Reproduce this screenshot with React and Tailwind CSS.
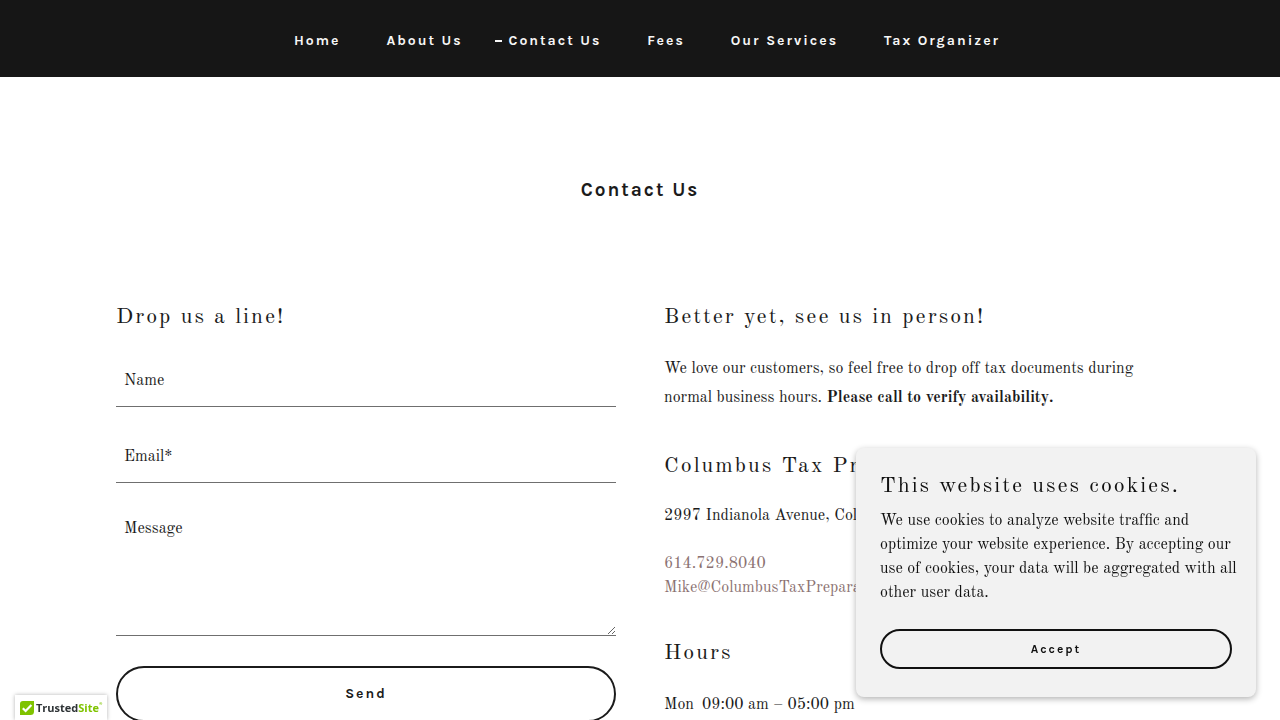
const NAV_ITEMS = [
  { label: 'Home', href: '#home' },
  { label: 'About Us', href: '#about' },
  { label: 'Contact Us', href: '#contact', active: true },
  { label: 'Fees', href: '#fees' },
  { label: 'Our Services', href: '#services' },
  { label: 'Tax Organizer', href: '#organizer' },
];

const Header = () => (
  <header className="bg-[#161616] px-6 pt-[30px] pb-[26px]">
    <nav className="flex justify-center gap-8">
      {NAV_ITEMS.map((item) => (
        <a
          key={item.label}
          href={item.href}
          className="flex items-center text-sm leading-[21px] font-bold tracking-[2px] text-[#f7f7f7] font-['Karla','Inter',sans-serif]"
        >
          <span className={`w-[7px] h-[2px] mr-[7px] ${item.active ? 'bg-[#f7f7f7]' : ''}`}></span>
          {item.label}
        </a>
      ))}
    </nav>
  </header>
);

const SectionTitle = ({ children }) => (
  <h2 className="text-[22px] leading-7 tracking-[2px] text-[#1b1b1b]">{children}</h2>
);

const Field = ({ id, label, type }) => (
  <div>
    <label htmlFor={id} className="sr-only">{label}</label>
    <input
      id={id}
      type={type}
      placeholder={label}
      className="block w-full h-[52px] px-2 border-b border-[#6f6f6f] bg-transparent outline-none placeholder:text-[#1b1b1b]"
    />
  </div>
);

const ContactForm = () => (
  <form className="flex-1" onSubmit={(e) => e.preventDefault()}>
    <SectionTitle>Drop us a line!</SectionTitle>
    <div className="mt-6 space-y-6">
      <Field id="name" label="Name" type="text" />
      <Field id="email" label="Email*" type="email" />
      <div>
        <label htmlFor="message" className="sr-only">Message</label>
        <textarea
          id="message"
          placeholder="Message"
          className="block w-full h-[129px] px-2 py-[10px] border-b border-[#6f6f6f] bg-transparent outline-none resize-y placeholder:text-[#1b1b1b]"
        ></textarea>
      </div>
    </div>
    <button
      type="submit"
      className="mt-[30px] w-full h-14 rounded-full border-2 border-[#1b1b1b] text-sm font-bold tracking-[2px] font-['Karla','Inter',sans-serif]"
    >
      Send
    </button>
  </form>
);

const ContactInfo = () => (
  <div className="flex-1">
    <SectionTitle>Better yet, see us in person!</SectionTitle>
    <p className="mt-6 leading-[29px]">
      We love our customers, so feel free to drop off tax documents during normal business hours.{' '}
      <strong className="font-bold">Please call to verify availability.</strong>
    </p>
    <div className="mt-[39px]">
      <SectionTitle>Columbus Tax Preparation</SectionTitle>
    </div>
    <p className="mt-6">2997 Indianola Avenue, Columbus, Ohio 43202</p>
    <div className="mt-6 flex flex-col items-start text-[#8b7272]">
      <a href="tel:6147298040">614.729.8040</a>
      <a href="mailto:Mike@ColumbusTaxPreparation.com">Mike@ColumbusTaxPreparation.com</a>
    </div>
    <div className="mt-[39px]">
      <SectionTitle>Hours</SectionTitle>
    </div>
    <table className="mt-[26px]">
      <tbody>
        <tr>
          <td className="pr-2">Mon</td>
          <td>09:00 am – 05:00 pm</td>
        </tr>
      </tbody>
    </table>
  </div>
);

const CookieBanner = () => (
  <div className="fixed right-6 bottom-[23px] w-[400px] px-6 pt-6 pb-7 rounded-lg bg-[#f2f2f2] text-[#111111] shadow-[0_2px_6px_rgba(0,0,0,0.3)]">
    <h4 className="text-[22px] leading-7 tracking-[2px]">This website uses cookies.</h4>
    <p className="mt-[9px] -mr-2 leading-6">
      We use cookies to analyze website traffic and optimize your website experience. By accepting our use of
      cookies, your data will be aggregated with all other user data.
    </p>
    <button
      type="button"
      className="mt-6 w-full h-10 rounded-full border-2 border-[#111111] text-xs font-bold tracking-[2px] font-['Karla','Inter',sans-serif]"
    >
      Accept
    </button>
  </div>
);

const TrustBadge = () => (
  <div className="fixed left-[15px] bottom-0 w-[92px] h-[25px] px-[5px] flex items-center bg-white shadow-[0_0_4px_rgba(0,0,0,0.3)] font-['Open_Sans',sans-serif] text-[11px] font-bold">
    <svg width="14" height="14" viewBox="0 0 14 14" className="mr-[2px] shrink-0">
      <path d="M3 0H14V10.5A3.5 3.5 0 0 1 10.5 14H0V3A3 3 0 0 1 3 0Z" fill="#7fc300" />
      <path d="M2.8 7.2L5.6 10L11.4 4" fill="none" stroke="#fff" strokeWidth="2.2" />
    </svg>
    <span className="text-[#2f3437]">Trusted</span>
    <span className="text-[#7fc300]">Site</span>
    <span className="self-start pt-[7px] text-[4px] leading-[4px] text-[#7fc300]">®</span>
  </div>
);

const App = () => (
  <div className="min-h-screen bg-white text-base leading-6 text-[#1b1b1b] font-['Old_Standard_TT','Liberation_Serif',serif]">
    <Header />
    <main className="max-w-[1096px] mx-auto px-6 pt-[100px] pb-20">
      <h1 className="text-center text-[19px] leading-[26px] font-bold tracking-[2px] font-['Karla','Inter',sans-serif]">
        Contact Us
      </h1>
      <div className="mt-[100px] flex gap-12">
        <ContactForm />
        <ContactInfo />
      </div>
    </main>
    <CookieBanner />
    <TrustBadge />
  </div>
);

export default App;
